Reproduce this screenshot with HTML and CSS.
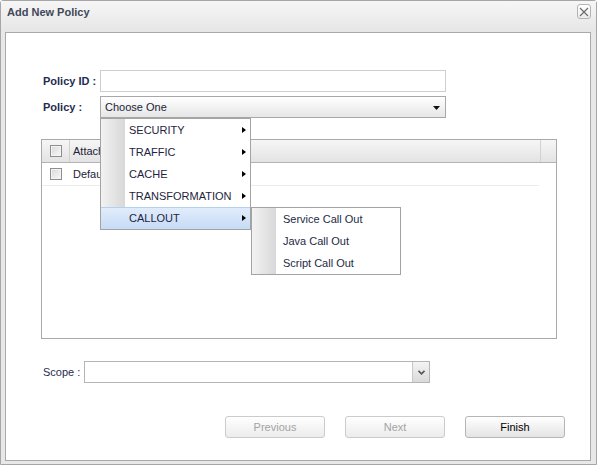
FILE: index.html
```html
<!DOCTYPE html>
<html>
<head>
<meta charset="utf-8">
<link rel="stylesheet" href="styles.css">
</head>
<body>
<div class="window">
  <div class="titlebar">
    <span class="title">Add New Policy</span>
    <span class="close">
      <svg width="10" height="10" viewBox="0 0 10 10"><path d="M1 1L9 9M9 1L1 9" stroke="#6a6a6a" stroke-width="1.1" fill="none"/></svg>
    </span>
  </div>
  <div class="panel">
    <div class="field-row">
      <label class="label bold">Policy ID :</label>
      <div class="textbox"></div>
    </div>
    <div class="field-row">
      <label class="label bold">Policy :</label>
      <div class="select">
        <span class="select-text">Choose One</span>
        <svg class="caret" width="7" height="4" viewBox="0 0 7 4"><path d="M0 0H7L3.5 4Z" fill="#111"/></svg>
      </div>
    </div>

    <div class="grid">
      <div class="grid-head">
        <div class="cell-check"><span class="checkbox"></span></div>
        <div class="cell-name">Attached</div>
        <div class="cell-spacer"></div>
        <div class="cell-scroll"></div>
      </div>
      <div class="grid-row">
        <div class="cell-check"><span class="checkbox"></span></div>
        <div class="cell-name">Default</div>
      </div>
    </div>

    <div class="scope-row">
      <label class="label scope-label">Scope :</label>
      <div class="combo">
        <div class="combo-input"></div>
        <div class="combo-trigger">
          <svg width="7" height="5" viewBox="0 0 7 5"><path d="M0.5 0.8L3.5 3.8L6.5 0.8" stroke="#555" stroke-width="1.6" fill="none"/></svg>
        </div>
      </div>
    </div>

    <div class="buttons">
      <div class="btn disabled">Previous</div>
      <div class="btn disabled">Next</div>
      <div class="btn">Finish</div>
    </div>

    <div class="menu">
      <div class="menu-item"><span>SECURITY</span><i class="arrow"></i></div>
      <div class="menu-item"><span>TRAFFIC</span><i class="arrow"></i></div>
      <div class="menu-item"><span>CACHE</span><i class="arrow"></i></div>
      <div class="menu-item"><span>TRANSFORMATION</span><i class="arrow"></i></div>
      <div class="menu-item active"><span>CALLOUT</span><i class="arrow"></i>
        <div class="menu submenu">
          <div class="menu-item sub"><span>Service Call Out</span></div>
          <div class="menu-item sub"><span>Java Call Out</span></div>
          <div class="menu-item sub"><span>Script Call Out</span></div>
        </div>
      </div>
    </div>
  </div>
</div>
</body>
</html>
```
FILE: styles.css
```css
* { box-sizing: border-box; }
html, body { margin: 0; padding: 0; background: #fff; }
body {
  font-family: "Liberation Sans", Arial, sans-serif;
  font-size: 11px;
  color: #1e2a44;
}
.window {
  width: 597px;
  height: 465px;
  border: 1px solid #a6a6a6;
  border-radius: 3px 3px 0 0;
  background: #e8e8e8;
  display: flex;
  flex-direction: column;
}
.titlebar {
  height: 31px;
  flex: none;
  background: linear-gradient(#f6f6f6, #e6e6e6);
  display: flex;
  align-items: flex-start;
  justify-content: space-between;
  padding: 4px 6px 0 6px;
}
.title {
  font-weight: bold;
  color: #3e4858;
  font-size: 11px;
  line-height: 14px;
}
.close {
  width: 14px;
  height: 15px;
  border: 1px solid #b4b4b4;
  border-radius: 3px;
  background: linear-gradient(#ffffff, #ececec);
  display: flex;
  align-items: center;
  justify-content: center;
  margin-top: -1px;
  margin-right: -1px;
}
.panel {
  position: relative;
  margin: 0 5px 3px 4px;
  height: 429px;
  border: 1px solid #a9a9a9;
  background: #fff;
  padding: 37px 25px 0 35px;
}
.field-row {
  display: flex;
  align-items: center;
  height: 22px;
  padding-left: 2px;
  margin-bottom: 4px;
}
.label {
  width: 57px;
  flex: none;
  color: #1f2d50;
}
.bold { font-weight: bold; }
.textbox {
  width: 346px;
  height: 22px;
  border: 1px solid #cfcfcf;
  background: #fff;
}
.select {
  width: 346px;
  height: 22px;
  border: 1px solid #a8a8a8;
  background: linear-gradient(#ffffff, #e6e6e6);
  display: flex;
  align-items: center;
  justify-content: space-between;
  padding: 0 5px 0 4px;
}
.select-text { color: #1c2236; }
.caret { margin-top: 1px; }

.grid {
  margin-top: 21px;
  width: 516px;
  height: 200px;
  border: 1px solid #a9a9a9;
  background: #fff;
}
.grid-head {
  display: flex;
  height: 23px;
  background: linear-gradient(#f6f6f6, #e3e3e3);
  border-bottom: 1px solid #b3b3b3;
}
.cell-check {
  width: 28px;
  flex: none;
  display: flex;
  align-items: center;
  padding-left: 8px;
  border-right: 1px solid #d0d0d0;
}
.grid-row .cell-check { border-right: none; }
.cell-name {
  padding-left: 3px;
  display: flex;
  align-items: center;
  color: #1c2236;
}
.cell-spacer { flex: 1; }
.cell-scroll {
  width: 16px;
  flex: none;
  border-left: 1px solid #d2d2d2;
}
.grid-row {
  display: flex;
  height: 23px;
  width: 497px;
  border-bottom: 1px solid #ececec;
}
.checkbox {
  width: 12px;
  height: 12px;
  border: 1px solid #8e8e8e;
  background: linear-gradient(135deg, #d9d9d9, #f8f8f8);
  box-shadow: inset 0 0 0 1px #f4f4f4;
}

.scope-row {
  display: flex;
  align-items: center;
  height: 22px;
  margin-top: 22px;
  padding-left: 2px;
}
.scope-label { width: 41px; }
.combo {
  width: 346px;
  height: 22px;
  border: 1px solid #b5b5b5;
  display: flex;
}
.combo-input { flex: 1; }
.combo-trigger {
  width: 17px;
  flex: none;
  border-left: 1px solid #c8c8c8;
  background: linear-gradient(#f4f4f4, #dadada);
  display: flex;
  align-items: center;
  justify-content: center;
}

.buttons {
  display: flex;
  justify-content: flex-end;
  gap: 20px;
  margin-top: 33px;
}
.btn {
  width: 100px;
  height: 22px;
  border: 1px solid #b5b5b5;
  border-radius: 3px;
  background: linear-gradient(#ffffff, #e4e4e4);
  display: flex;
  align-items: center;
  justify-content: center;
  color: #000;
}
.btn.disabled {
  color: #a3a3a3;
  border-color: #cbcbcb;
  background: linear-gradient(#ffffff, #ececec);
}

.menu {
  position: absolute;
  left: 94px;
  top: 85px;
  width: 151px;
  border: 1px solid #a3a3a3;
  background: #fff;
  background-image: linear-gradient(90deg, #f2f2f2, #d8d8d8);
  background-size: 24px 100%;
  background-repeat: no-repeat;
}
.menu-item {
  position: relative;
  height: 22px;
  display: flex;
  align-items: center;
  padding-left: 28px;
  color: #1e2440;
}
.menu-item .arrow {
  position: absolute;
  right: 4px;
  top: 8px;
  width: 0;
  height: 0;
  border-top: 3.5px solid transparent;
  border-bottom: 3.5px solid transparent;
  border-left: 4px solid #000;
}
.menu-item.active {
  background: linear-gradient(#e2edfb, #c6dbf6);
  box-shadow: inset 0 1px 0 #b5cff0;
}
.submenu {
  left: calc(100% + 1px);
  top: 0;
  width: 150px;
}
.menu-item.sub {
  padding-left: 31px;
  color: #1e2a44;
}
```
